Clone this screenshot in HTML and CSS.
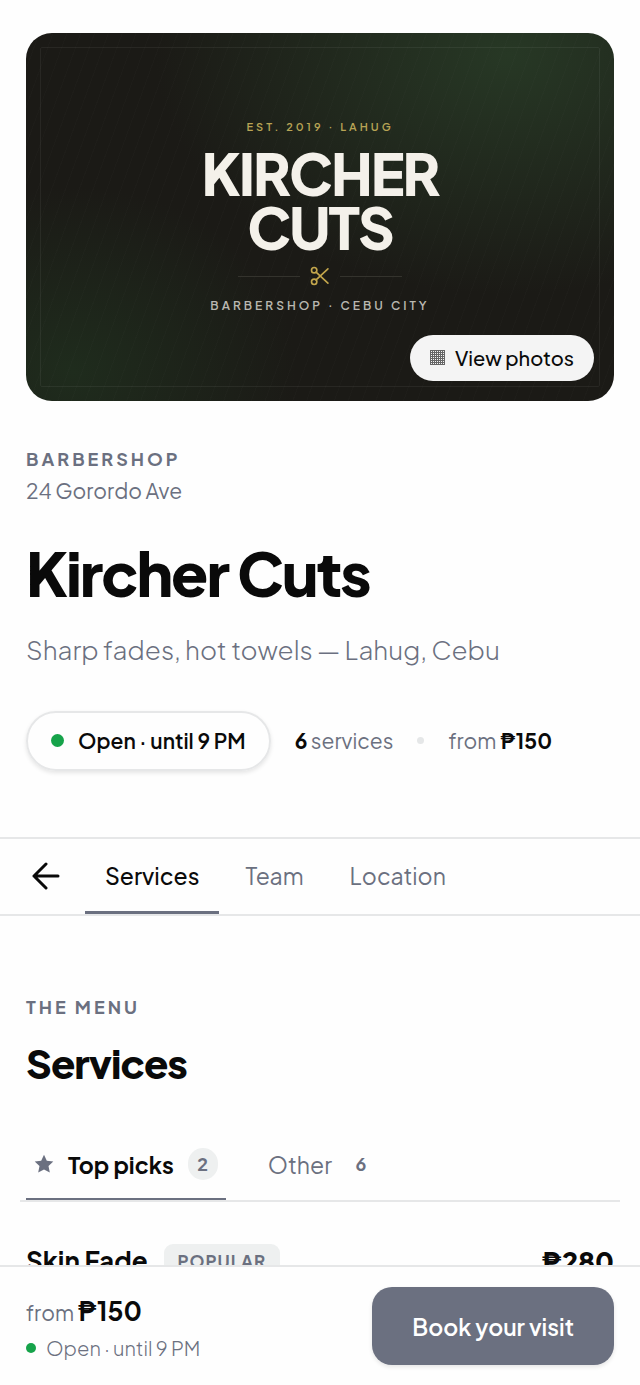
FILE: index.html
```html
<!DOCTYPE html>
<html lang="en">
<head>
    <meta charset="UTF-8">
    <meta name="viewport" content="width=device-width, initial-scale=1">
    <title>Kircher Cuts</title>
    <link rel="stylesheet" href="styles.css">
</head>
<body>
    <header class="shop">
        <div class="cover">
            <div class="cover-frame"></div>
            <p class="cover-est">EST. 2019 · LAHUG</p>
            <p class="cover-name">KIRCHER<br>CUTS</p>
            <div class="cover-rule">
                <svg class="scissors" viewBox="0 0 24 24" aria-hidden="true">
                    <circle cx="5" cy="5" r="3.200"/>
                    <circle cx="5" cy="19" r="3.200"/>
                    <path d="M21.500 3.500 7.300 16.700M7.300 7.300 21.500 20.500"/>
                </svg>
            </div>
            <p class="cover-place">BARBERSHOP · CEBU CITY</p>
            <button class="photos" type="button">
                <svg class="grid-icon" viewBox="0 0 15 15" aria-hidden="true">
                    <path d="M.5 0v15M2.5 0v15M4.5 0v15M6.5 0v15M8.5 0v15M10.5 0v15M12.5 0v15M14.5 0v15M0 .5h15M0 2.5h15M0 4.5h15M0 6.5h15M0 8.5h15M0 10.5h15M0 12.5h15M0 14.5h15"/>
                </svg>
                View photos
            </button>
        </div>
        <p class="eyebrow">BARBERSHOP</p>
        <p class="address">24 Gorordo Ave</p>
        <h1>Kircher Cuts</h1>
        <p class="tagline">Sharp fades, hot towels — Lahug, Cebu</p>
        <div class="facts">
            <span class="status"><i class="dot"></i>Open · until 9 PM</span>
            <span><b>6</b> services</span>
            <i class="sep"></i>
            <span>from <b>₱150</b></span>
        </div>
    </header>

    <nav class="page-nav">
        <a class="back" href="#" aria-label="Back">
            <svg viewBox="0 0 28 28" aria-hidden="true"><path d="M26 14H2M14 2 2 14l12 12"/></svg>
        </a>
        <a class="selected" href="#services">Services</a>
        <a href="#team">Team</a>
        <a href="#location">Location</a>
    </nav>

    <main class="menu" id="services">
        <p class="eyebrow">THE MENU</p>
        <h2>Services</h2>
        <div class="cats">
            <button class="cat selected" type="button">
                <svg class="star" viewBox="0 0 20 20" aria-hidden="true"><path d="M10 .8l2.800 6 6.500.8-4.800 4.500 1.300 6.500L10 15.400l-5.800 3.200 1.300-6.500L.7 7.600l6.500-.8z"/></svg>
                Top picks
                <span class="count">2</span>
            </button>
            <button class="cat" type="button">
                Other
                <span class="count">6</span>
            </button>
        </div>
        <div class="service">
            <h3>Skin Fade</h3>
            <span class="tag">POPULAR</span>
            <b class="price">₱280</b>
        </div>
    </main>

    <footer class="book-bar">
        <div>
            <p class="book-price">from <b>₱150</b></p>
            <p class="book-status"><i class="dot"></i>Open · until 9 PM</p>
        </div>
        <button class="book" type="button">Book your visit</button>
    </footer>
</body>
</html>
```
FILE: styles.css
```css
* {
    margin: 0;
    padding: 0;
    box-sizing: border-box;
}
body {
    background: #fefefe;
    color: #0a0a0a;
    font-family: "Plus Jakarta Sans", Inter, sans-serif;
    font-size: 21px;
}
a {
    color: inherit;
    text-decoration: none;
}
button {
    border: none;
    background: none;
    color: inherit;
    font: inherit;
    cursor: pointer;
}
svg {
    display: block;
    fill: none;
    stroke: currentColor;
}

/* shop header */
.shop {
    padding: 33px 26px 66px;
}
.cover {
    position: relative;
    display: flex;
    flex-direction: column;
    align-items: center;
    aspect-ratio: 8 / 5;
    margin-bottom: 46px;
    padding-top: 84px;
    border-radius: 26px;
    overflow: hidden;
    background:
        repeating-linear-gradient(110deg, transparent 0 12px, rgba(255, 255, 255, 0.01) 12px 13px),
        radial-gradient(ellipse 60% 65% at 82% 6%, #273825, transparent),
        radial-gradient(ellipse 38% 50% at 8% 92%, #1f2c1d, transparent),
        #1b1a16;
}
.cover-frame {
    position: absolute;
    inset: 14px;
    border: 1px solid rgba(255, 255, 255, 0.06);
    border-radius: 2px;
}
.cover-est {
    color: #b8a455;
    font-size: 11px;
    font-weight: 600;
    line-height: 20px;
    letter-spacing: 3px;
}
.cover-name {
    margin-top: 9px;
    color: #f4f1ea;
    font-size: 57px;
    font-weight: 800;
    line-height: 54px;
    letter-spacing: -2px;
    text-align: center;
}
.cover-rule {
    display: flex;
    align-items: center;
    gap: 10px;
    margin-top: 12px;
}
.cover-rule::before,
.cover-rule::after {
    content: "";
    width: 62px;
    height: 1px;
    background: #34332d;
}
.scissors {
    width: 20px;
    height: 20px;
    color: #c3a64c;
    stroke-width: 2;
    stroke-linecap: round;
}
.cover-place {
    margin-top: 10px;
    color: #b9b7b0;
    font-size: 12px;
    font-weight: 600;
    line-height: 20px;
    letter-spacing: 3px;
}
.photos {
    position: absolute;
    right: 20px;
    bottom: 20px;
    display: flex;
    align-items: center;
    gap: 10px;
    height: 46px;
    padding: 0 20px;
    border-radius: 23px;
    background: #f4f4f4;
    font-size: 20px;
    font-weight: 500;
}
.grid-icon {
    width: 15px;
    height: 15px;
    color: #666;
}
.eyebrow {
    color: #6b7080;
    font-size: 18px;
    font-weight: 700;
    line-height: 24px;
    letter-spacing: 3px;
}
.address {
    color: #6b7080;
    font-weight: 400;
    line-height: 40px;
}
h1 {
    margin-top: 30px;
    font-size: 61px;
    font-weight: 800;
    line-height: 64px;
    letter-spacing: -2px;
}
.tagline {
    margin-top: 28px;
    color: #6b7080;
    font-size: 26px;
    font-weight: 300;
    line-height: 34px;
}
.facts {
    display: flex;
    align-items: center;
    gap: 24px;
    margin-top: 44px;
    color: #6b7080;
    font-weight: 400;
    white-space: nowrap;
}
.facts b {
    color: #0a0a0a;
    font-weight: 700;
}
.status {
    display: flex;
    align-items: center;
    gap: 14px;
    height: 60px;
    padding: 0 23px;
    border: 2px solid #e6e7e8;
    border-radius: 30px;
    box-shadow: 0 2px 4px rgba(0, 0, 0, 0.1);
    color: #0a0a0a;
    font-weight: 600;
}
.dot {
    width: 13px;
    height: 13px;
    border-radius: 50%;
    background: #16a34a;
}
.sep {
    width: 7px;
    height: 7px;
    border-radius: 50%;
    background: #e5e7e8;
}

/* page tabs */
.page-nav {
    display: flex;
    height: 79px;
    padding: 0 26px;
    border-top: 2px solid #e6e7e8;
    border-bottom: 2px solid #e6e7e8;
}
.page-nav a {
    display: flex;
    align-items: center;
    padding: 2px 20px 0;
    border-bottom: 3px solid transparent;
    margin-right: 6px;
    color: #6b7080;
    font-size: 23px;
    font-weight: 400;
}
.page-nav .selected {
    border-color: #6b7080;
    color: #0a0a0a;
    font-weight: 500;
}
.page-nav .back {
    margin-right: 19px;
    padding: 2px 6px 0;
    color: #0a0a0a;
}
.back svg {
    width: 28px;
    height: 28px;
    stroke-width: 3;
    stroke-linecap: round;
    stroke-linejoin: round;
}

/* service menu */
.menu {
    padding: 79px 26px 0;
}
h2 {
    margin-top: 20px;
    font-size: 40px;
    font-weight: 800;
    line-height: 48px;
    letter-spacing: -1px;
}
.cats {
    display: flex;
    gap: 34px;
    height: 71px;
    margin: 44px -6px 0;
    padding: 0 6px;
    border-bottom: 2px solid #e6e7e8;
}
.cat {
    display: flex;
    align-items: center;
    gap: 14px;
    padding: 0 8px;
    border-bottom: 2px solid transparent;
    color: #6b7080;
    font-size: 23px;
    font-weight: 400;
}
.cat.selected {
    border-color: #6b7080;
    color: #0a0a0a;
    font-weight: 700;
}
.star {
    width: 20px;
    height: 20px;
    color: #6b7080;
    fill: currentColor;
    stroke: none;
}
.count {
    min-width: 30px;
    border-radius: 16px;
    color: #6b7080;
    font-size: 18px;
    font-weight: 700;
    line-height: 32px;
}
.selected .count {
    background: #eef0f0;
}
.service {
    display: flex;
    align-items: center;
    margin-top: 42px;
}
h3,
.price {
    font-size: 26px;
    font-weight: 700;
    line-height: 34px;
}
.tag {
    margin-left: 16px;
    padding: 0 14px;
    border-radius: 9px;
    background: #eef0f0;
    color: #6b7080;
    font-size: 17px;
    font-weight: 700;
    line-height: 34px;
    letter-spacing: 1px;
}
.price {
    margin-left: auto;
    font-size: 27px;
    font-weight: 800;
}

/* booking bar */
.book-bar {
    position: fixed;
    right: 0;
    bottom: 0;
    left: 0;
    display: flex;
    justify-content: space-between;
    padding: 20px 26px;
    border-top: 2px solid #e6e7e8;
    background: #fefefe;
    color: #6b7080;
    font-weight: 400;
}
.book-price {
    line-height: 48px;
}
.book-price b {
    color: #0a0a0a;
    font-size: 26px;
    font-weight: 700;
}
.book-status {
    display: flex;
    align-items: center;
    gap: 10px;
    font-size: 20px;
    font-weight: 300;
    line-height: 22px;
}
.book-status .dot {
    width: 10px;
    height: 10px;
}
.book {
    height: 78px;
    padding: 0 40px;
    border-radius: 20px;
    background: #6b7080;
    box-shadow: 0 2px 4px rgba(0, 0, 0, 0.1);
    color: #fff;
    font-size: 23px;
    font-weight: 600;
}
```
